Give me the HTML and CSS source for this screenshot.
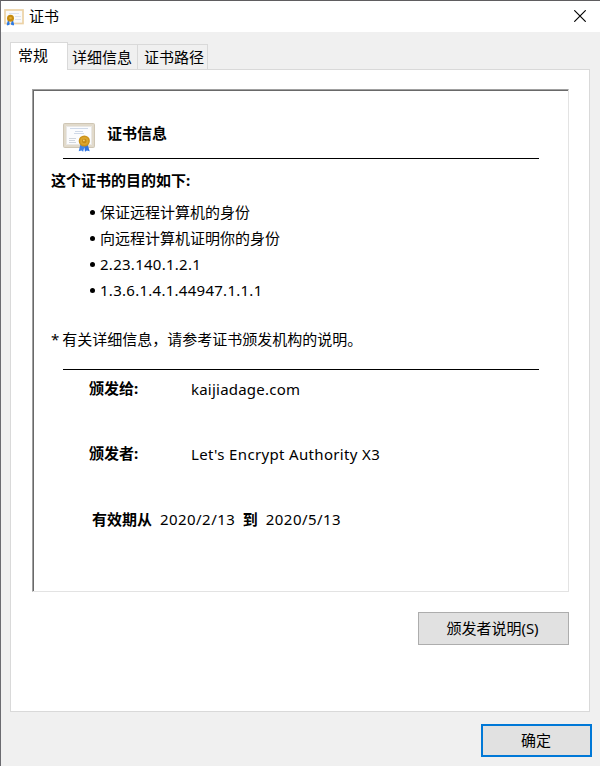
FILE: index.html
```html
<!DOCTYPE html>
<html lang="zh-CN">
<head>
<meta charset="utf-8">
<title>证书</title>
<link rel="stylesheet" href="styles.css">
</head>
<body>
<svg class="defs" width="0" height="0" aria-hidden="true">
  <symbol id="cert" viewBox="0 0 32 30">
    <rect x=".5" y="1.500" width="31" height="24" rx="1" fill="#ddd5c6" stroke="#cfc6b5"/>
    <rect x="2" y="3" width="28" height="21" fill="none" stroke="#e6dfd0"/>
    <rect x="3.500" y="4.500" width="25" height="18" fill="#fbfcfe" stroke="#e9e7e4"/>
    <path d="M7 6.500h18M12 9.500h8M11 11.500h10" stroke="#c9d5e5" stroke-width=".9"/>
    <path d="M6 16.500h7M6 18.500h6M6 20.500h7" stroke="#c5cad4" stroke-width=".8"/>
    <path d="M17.500 22l-1.800 7.200 2.800-.8 1.600 1.400 1.700-6z" fill="#3f82e8"/>
    <path d="M24.500 22l2.200 7.200-2.800-.8-1.900 1.400-1-6z" fill="#2f74e0"/>
    <circle cx="21.300" cy="19" r="5.600" fill="#cb921a"/>
    <circle cx="21.300" cy="19" r="4.100" fill="#dba52d"/>
    <circle cx="21.300" cy="19" r="2.300" fill="#c58a14"/>
    <circle cx="20.900" cy="18.400" r=".9" fill="#f3d271"/>
  </symbol>
</svg>
<div class="window">
  <header class="titlebar">
    <svg class="app-icon" viewBox="0 0 20 17">
      <rect x="1" y="1" width="18" height="13.500" fill="#fafafa" stroke="#ecd2a5" stroke-width="1.700"/>
      <path d="M5 4.500h10M11 7.500h6M11 10.500h6" stroke="#dce3ee"/>
      <path d="M4.500 11L3.200 16l2-.6zM8.500 11L9.600 16l-2.200-.6z" fill="#2878e6" stroke="#2878e6"/>
      <circle cx="6.500" cy="9.300" r="3.500" fill="#c68b0d"/>
      <circle cx="6.500" cy="9" r="1.300" fill="#e0ad37"/>
    </svg>
    <span class="title">证书</span>
    <svg class="close" viewBox="0 0 12 12"><path d="M.3.300l11.400 11.400M11.700.300L.3 11.700" stroke="#000" stroke-width="1.150"/></svg>
  </header>
  <nav class="tabs">
    <div class="tab active">常规</div>
    <div class="tab">详细信息</div>
    <div class="tab last">证书路径</div>
  </nav>
  <main class="panel">
    <section class="info">
      <div class="info-head">
        <svg class="cert-icon"><use href="#cert"/></svg>
        <b>证书信息</b>
      </div>
      <b class="purpose">这个证书的目的如下:</b>
      <ul class="purposes">
        <li>保证远程计算机的身份</li>
        <li>向远程计算机证明你的身份</li>
        <li class="oid">2.23.140.1.2.1</li>
        <li class="oid">1.3.6.1.4.1.44947.1.1.1</li>
      </ul>
      <p class="note">* 有关详细信息，请参考证书颁发机构的说明。</p>
      <div class="fields">
        <div class="field"><b>颁发给:</b><span class="subject">kaijiadage.com</span></div>
        <div class="field"><b>颁发者:</b><span class="issuer">Let's Encrypt Authority X3</span></div>
        <div class="validity"><b>有效期从</b><span>2020/2/13</span><b>到</b><span>2020/5/13</span></div>
      </div>
    </section>
    <button class="btn statement">颁发者说明(S)</button>
  </main>
  <footer class="footer"><button class="btn ok">确定</button></footer>
</div>
</body>
</html>
```
FILE: styles.css
```css
* { box-sizing: border-box; margin: 0; padding: 0; }
body {
  width: 600px;
  height: 766px;
  overflow: hidden;
  font: 15px/20px "Noto Sans", "Noto Sans CJK SC", sans-serif;
  color: #000;
}
b { font-weight: 700; }
.defs { position: absolute; }
.window {
  height: 766px;
  display: flex;
  flex-direction: column;
  background: #f0f0f0;
  border-top: 1px solid #5f5d60;
  border-left: 1px solid #6b6b70;
}
.titlebar {
  height: 31px;
  display: flex;
  align-items: flex-start;
  padding: 5px 14px 0 3px;
  background: #fff;
}
.app-icon { width: 20px; height: 17px; margin-top: 3px; }
.title { margin-left: 5px; }
.close { width: 12px; height: 12px; margin: 4px 0 0 auto; }
.tabs {
  height: 37px;
  display: flex;
  align-items: flex-end;
  margin-left: 9px;
}
.tab {
  height: 25px;
  width: 70px;
  padding: 2px 0 0 4px;
  border: 1px solid #d9d9d9;
  border-width: 1px 0 0 1px;
  white-space: nowrap;
}
.tab:nth-child(2) { width: 69px; border-left: 0; padding-left: 4px; }
.tab.last { width: 71px; padding-left: 6px; border-right-width: 1px; }
.tab.active {
  width: 58px;
  height: 28px;
  margin-bottom: -1px;
  padding: 2px 0 0 7px;
  border-right-width: 1px;
  background: #fff;
  position: relative;
}
.panel {
  width: 580px;
  height: 643px;
  margin-left: 9px;
  padding: 19px 20px 0 21px;
  background: #fff;
  border: 1px solid #d9d9d9;
  display: flex;
  flex-direction: column;
}
.info {
  width: 537px;
  height: 503px;
  border: 1px solid #e3e3e3;
  border-top-color: #a0a0a0;
  border-left-color: #a0a0a0;
  box-shadow: inset 1px 1px #696969;
  padding: 32px 29px 0 30px;
}
.info-head {
  height: 37px;
  display: flex;
  border-bottom: 1px solid #000;
}
.cert-icon { width: 32px; height: 30px; }
.info-head b { margin: 1px 0 0 12px; }
.purpose { display: block; margin: 11px 0 0 -12px; }
.purposes { list-style: none; margin: 9px 0 0 25px; }
.purposes li { display: flex; align-items: center; height: 26px; }
.purposes li::before {
  content: "";
  width: 5px;
  height: 5px;
  margin: 1px 5px 0 2px;
  border-radius: 50%;
  background: #000;
}
.purposes .oid { letter-spacing: .27px; }
.note { margin: 26px 0 0 -12px; white-space: nowrap; word-spacing: -1px; }
.fields { border-top: 1px solid #000; margin-top: 20px; padding-top: 8px; }
.field { display: flex; height: 65px; padding-left: 26px; }
.field b { width: 102px; }
.field span { padding-top: 1px; }
.subject { letter-spacing: .22px; }
.issuer { letter-spacing: .34px; }
.validity { display: flex; gap: 8px; padding: 1px 0 0 29px; }
.validity span { letter-spacing: .44px; margin-right: -.4px; }
.btn {
  font: inherit;
  color: #000;
  background: #e1e1e1;
  border: 1px solid #adadad;
}
.statement { width: 151px; height: 33px; align-self: flex-end; margin-top: 20px; padding: 0 2px 2px 0; }
.footer { display: flex; justify-content: flex-end; padding: 12px 8px 0 0; }
.ok { width: 111px; height: 33px; border: 2px solid #0078d7; padding: 0 1px 2px 0; }
```
